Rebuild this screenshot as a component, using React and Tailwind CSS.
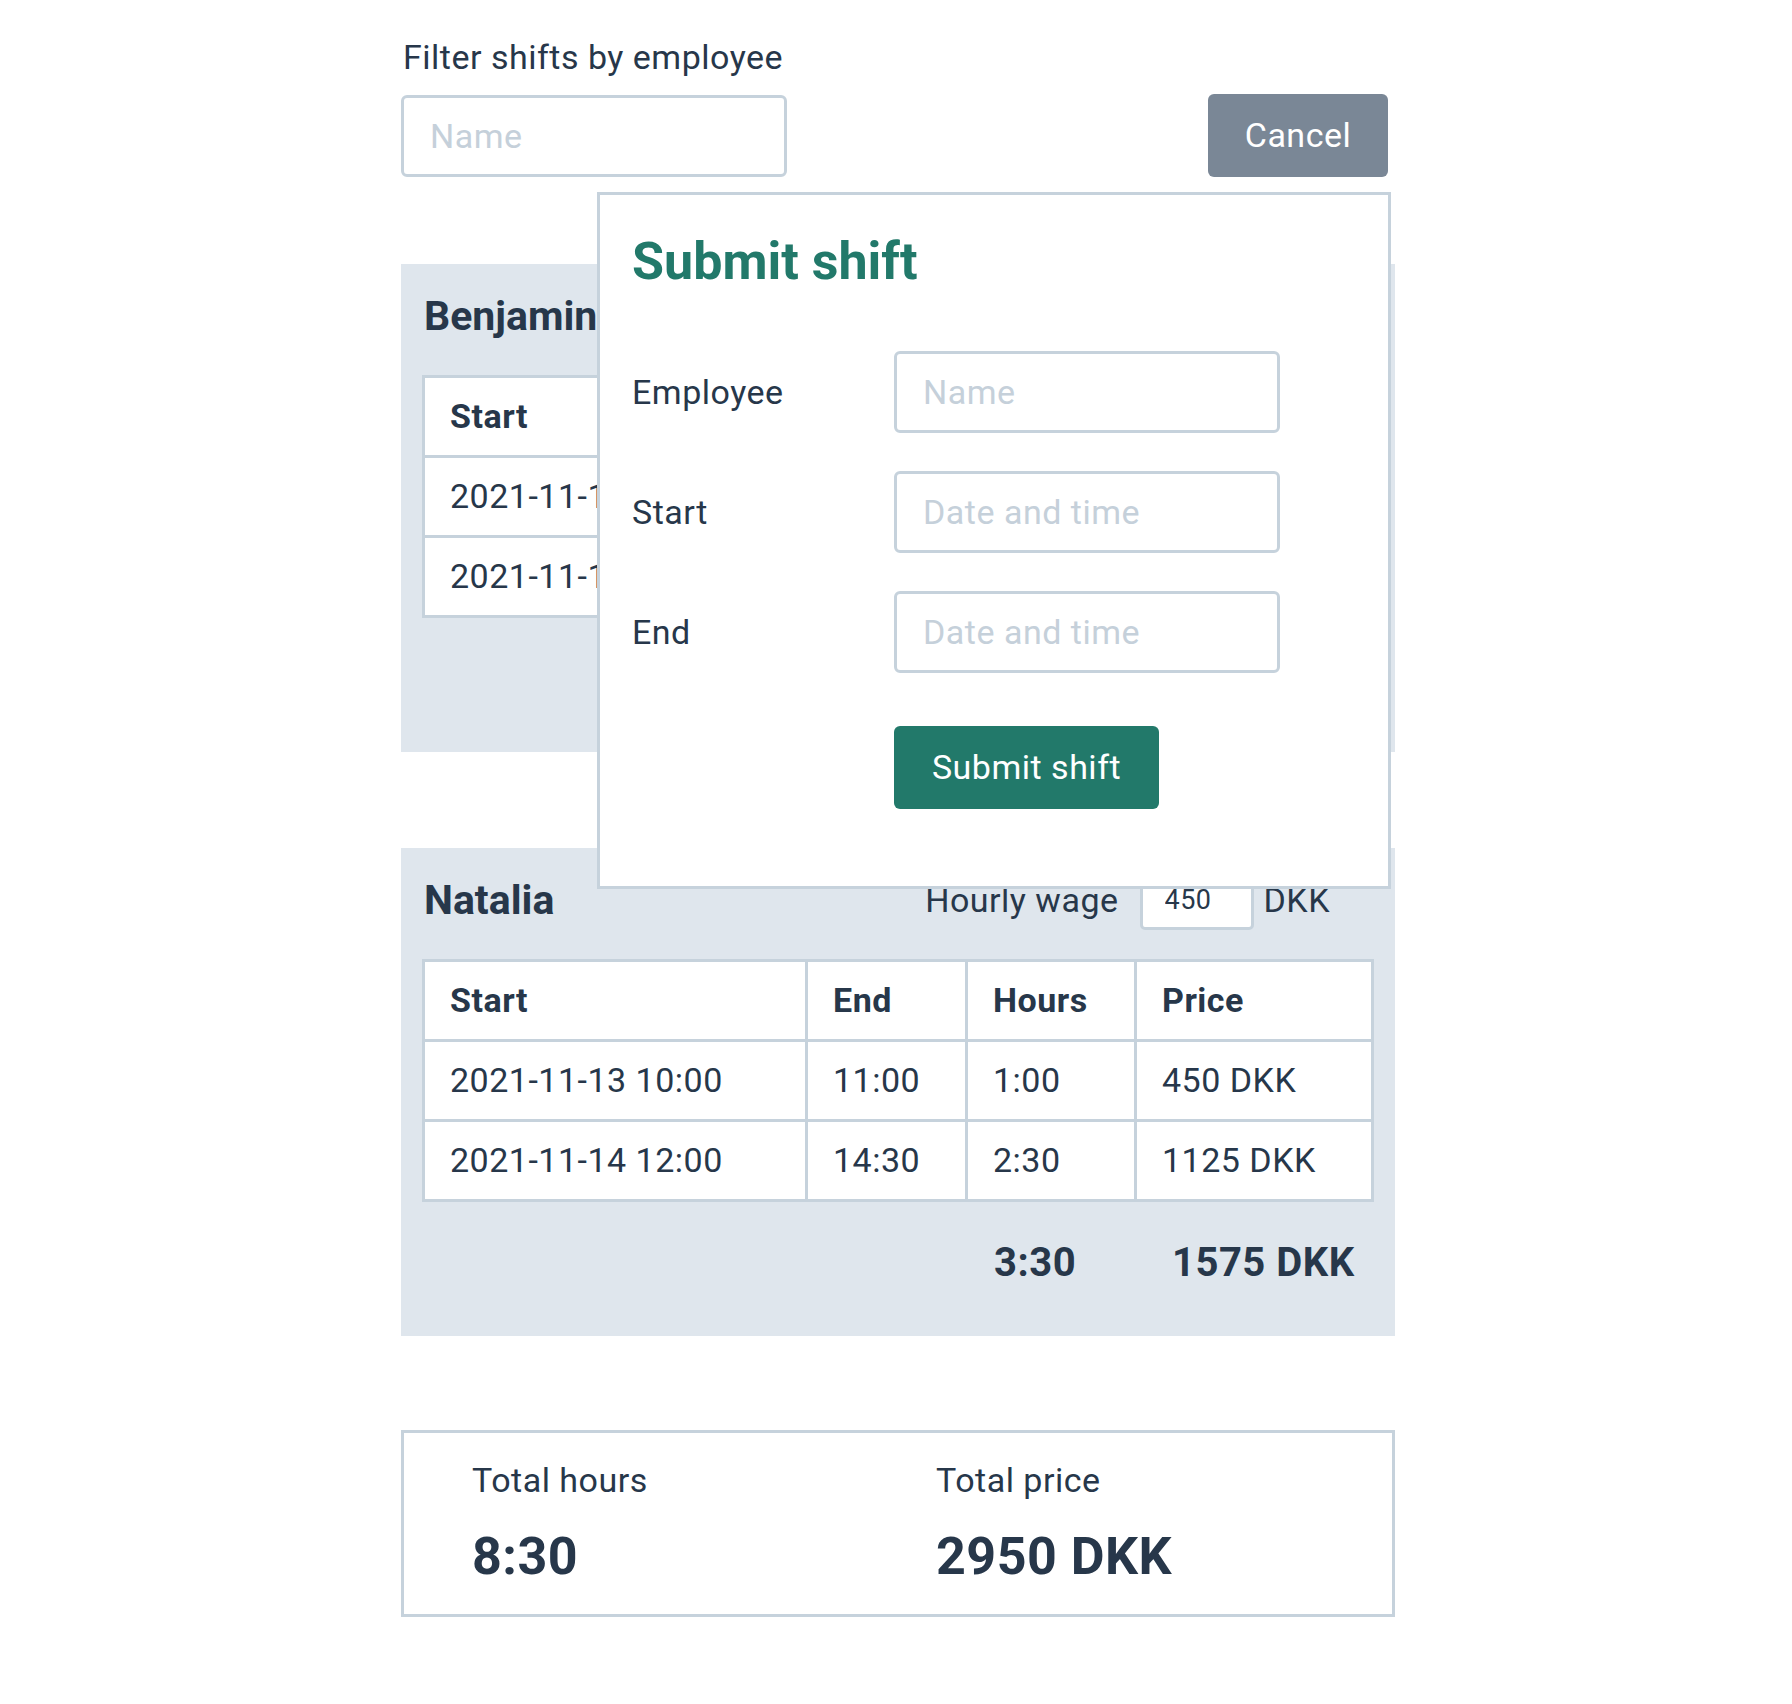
import React from "react";

const employees = [
  {
    name: "Benjamin",
    wage: "275",
    rows: [
      ["2021-11-10 09:00", "12:00", "3:00", "825 DKK"],
      ["2021-11-11 13:00", "15:00", "2:00", "550 DKK"],
    ],
    hours: "5:00",
    price: "1375 DKK",
  },
  {
    name: "Natalia",
    wage: "450",
    rows: [
      ["2021-11-13 10:00", "11:00", "1:00", "450 DKK"],
      ["2021-11-14 12:00", "14:30", "2:30", "1125 DKK"],
    ],
    hours: "3:30",
    price: "1575 DKK",
  },
];

function EmployeeCard({ emp }) {
  const head = ["Start", "End", "Hours", "Price"];
  return (
    <section className="bg-[#dfe6ed] px-[21px] pt-[20px] pb-[48px]">
      <div className="flex h-[64px] items-center justify-between">
        <h2 className="pl-[2px] text-[41px] font-bold leading-none tracking-normal">{emp.name}</h2>
        <div className="mr-[44px] flex items-center text-[34px]">
          <span>Hourly wage</span>
          <input
            defaultValue={emp.wage}
            className="ml-[21px] h-[60px] w-[114px] rounded-[5px] border-[3px] border-[#c6d2dc] bg-white px-[22px] text-[27px] text-[#28384a] outline-none"
          />
          <span className="ml-[10px]">DKK</span>
        </div>
      </div>
      <div className="mt-[27px] grid grid-cols-[380px_157px_166px_1fr] gap-[3px] border-[3px] border-[#c6d2dc] bg-[#c6d2dc]">
        {head.map((h) => (
          <div key={h} className="flex h-[77px] items-center bg-white px-[25px] text-[34px] font-bold">
            {h}
          </div>
        ))}
        {emp.rows.map((r, i) =>
          r.map((c, j) => (
            <div key={i + "-" + j} className="flex h-[77px] items-center bg-white px-[25px] text-[34px]">
              {c}
            </div>
          ))
        )}
      </div>
      <div className="mt-[36px] flex h-[50px] items-center text-[40px] font-bold">
        <div className="w-[572px] shrink-0" />
        <div className="w-[178px] shrink-0">{emp.hours}</div>
        <div>{emp.price}</div>
      </div>
    </section>
  );
}

export default function App() {
  return (
    <div className="min-h-screen bg-white font-['Roboto',sans-serif] tracking-[0.5px] text-[#27374a]">
      <div className="relative ml-[401px] w-[994px] pt-[33px] pb-[87px]">
        <label className="block pl-[2px] text-[34px] leading-[48px]">Filter shifts by employee</label>
        <div className="mt-[13px] flex items-center justify-between">
          <input
            placeholder="Name"
            className="h-[82px] w-[386px] rounded-[6px] border-[3px] border-[#c6d2dc] px-[26px] text-[34px] outline-none placeholder:text-[#c5d0da]"
          />
          <button className="mr-[7px] h-[83px] w-[180px] rounded-[6px] bg-[#7a8796] text-[34px] text-white">Cancel</button>
        </div>

        <div className="mt-[87px] flex flex-col gap-[96px]">
          {employees.map((e) => (
            <EmployeeCard key={e.name} emp={e} />
          ))}
        </div>

        <div className="mt-[94px] flex h-[187px] border-[3px] border-[#c6d2dc] bg-white pl-[68px] pt-[23px]">
          <div className="w-[464px]">
            <div className="text-[34px] leading-[48px]">Total hours</div>
            <div className="mt-[22px] text-[52px] font-bold leading-[62px]">8:30</div>
          </div>
          <div>
            <div className="text-[34px] leading-[48px]">Total price</div>
            <div className="mt-[22px] text-[52px] font-bold leading-[62px]">2950 DKK</div>
          </div>
        </div>

        <div className="absolute left-[196px] top-[192px] z-10 h-[697px] w-[794px] border-[3px] border-[#c6d2dc] bg-white px-[32px] pt-[36px]">
          <h1 className="text-[52px] font-bold leading-[62px] tracking-normal text-[#22796a]">Submit shift</h1>
          <div className="mt-[58px] grid grid-cols-[262px_386px] gap-y-[38px]">
            {[
              ["Employee", "Name"],
              ["Start", "Date and time"],
              ["End", "Date and time"],
            ].map(([label, ph]) => (
              <React.Fragment key={label}>
                <div className="flex items-center text-[34px]">{label}</div>
                <input
                  placeholder={ph}
                  className="h-[82px] w-[386px] rounded-[6px] border-[3px] border-[#c6d2dc] px-[26px] text-[34px] outline-none placeholder:text-[#c5d0da]"
                />
              </React.Fragment>
            ))}
          </div>
          <button className="ml-[262px] mt-[53px] h-[83px] w-[265px] rounded-[6px] bg-[#22796a] text-[34px] text-white">
            Submit shift
          </button>
        </div>
      </div>
    </div>
  );
}
